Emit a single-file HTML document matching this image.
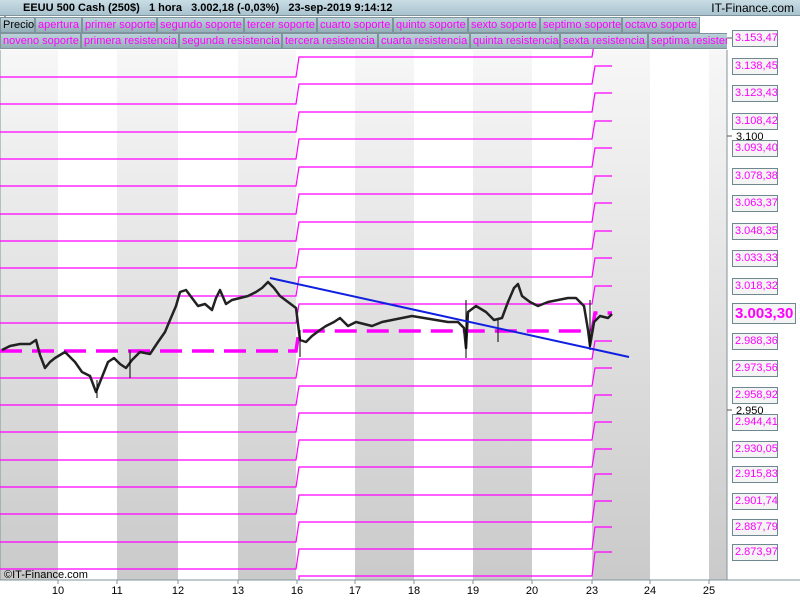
<!DOCTYPE html>
<html><head><meta charset="utf-8"><style>
*{margin:0;padding:0;box-sizing:border-box}
body{width:800px;height:600px;overflow:hidden;background:#fff;font-family:"Liberation Sans",sans-serif;position:relative}
#hdr{position:absolute;left:0;top:0;width:800px;height:16px;background:linear-gradient(#c9dde5,#a9c3cf);border-bottom:1px solid #7f939c;font-size:11px;font-weight:bold;line-height:16px}
.row{position:absolute;left:0;height:17px;width:727px;overflow:hidden;white-space:nowrap;font-size:11px}
.c{position:absolute;top:0;height:16px;line-height:15px;padding-left:2px;color:#f0f;background:linear-gradient(#bcd2da,#94aeb8);border:1px solid #7f939c;overflow:hidden}
.lab{position:absolute;left:732px;width:46px;height:17px;border:1px solid #6f8890;background:#f4f4f4;color:#f0f;font-size:11px;line-height:15px;text-align:left;padding-left:2px;white-space:nowrap;overflow:hidden}
.tk{position:absolute;top:585px;font-size:11px;width:30px;text-align:center}
</style></head><body>
<svg width="800" height="600" style="position:absolute;left:0;top:0">
<defs><linearGradient id="g" x1="0" y1="0" x2="0" y2="1"><stop offset="0" stop-color="#f7f7f7"/><stop offset="1" stop-color="#cacaca"/></linearGradient></defs>
<g fill="url(#g)">
<rect x="0" y="50" width="58" height="530"/><rect x="117" y="50" width="61" height="530"/><rect x="238" y="50" width="58" height="530"/><rect x="355" y="50" width="59" height="530"/><rect x="473" y="50" width="59" height="530"/><rect x="592" y="50" width="58" height="530"/><rect x="709" y="50" width="18" height="530"/>
</g>
<line x1="727" y1="50" x2="727" y2="580" stroke="#7f939c"/>
<line x1="0" y1="580" x2="800" y2="580" stroke="#7f939c"/>
<line x1="0" y1="50" x2="0" y2="580" stroke="#7f939c"/>
<g stroke="#7f939c"><line x1="58" y1="580" x2="58" y2="584"/><line x1="117" y1="580" x2="117" y2="584"/><line x1="178" y1="580" x2="178" y2="584"/><line x1="238" y1="580" x2="238" y2="584"/><line x1="297" y1="580" x2="297" y2="584"/><line x1="355" y1="580" x2="355" y2="584"/><line x1="414" y1="580" x2="414" y2="584"/><line x1="473" y1="580" x2="473" y2="584"/><line x1="532" y1="580" x2="532" y2="584"/><line x1="592" y1="580" x2="592" y2="584"/><line x1="650" y1="580" x2="650" y2="584"/><line x1="709" y1="580" x2="709" y2="584"/></g>
<g fill="none" stroke="#f0f" stroke-width="1.2">
<path d="M0 77H296L299 57H592L595 38H612"/>
<path d="M0 104H296L299 84H592L595 66H612"/>
<path d="M0 132H296L299 112H592L595 93H612"/>
<path d="M0 159H296L299 139H592L595 121H612"/>
<path d="M0 186H296L299 167H592L595 148H612"/>
<path d="M0 214H296L299 194H592L595 176H612"/>
<path d="M0 241H296L299 222H592L595 203H612"/>
<path d="M0 268H296L299 249H592L595 231H612"/>
<path d="M0 296H296L299 277H592L595 258H612"/>
<path d="M0 323H296L299 304H592L595 286H612"/>
<path d="M0 378H296L299 359H592L595 341H612"/>
<path d="M0 405H296L299 386H592L595 368H612"/>
<path d="M0 432H296L299 413H592L595 395H612"/>
<path d="M0 460H296L299 440H592L595 422H612"/>
<path d="M0 487H296L299 467H592L595 449H612"/>
<path d="M0 514H296L299 495H592L595 474H612"/>
<path d="M0 542H296L299 522H592L595 501H612"/>
<path d="M0 569H296L299 549H592L595 527H612"/>
<path d="M299 580V576H592L595 552H612"/>
</g>
<path d="M0 351H296L299 331H592L595 313H612" fill="none" stroke="#f0f" stroke-width="3.5" stroke-dasharray="22 10"/>
<polyline fill="none" stroke="#222" stroke-width="2.5" stroke-linejoin="round" points="2,350 10,346 20,344 30,344 36,340 40,355 45,368 50,362 55,358 65,352 75,362 82,372 90,376 96,392 100,382 104,372 108,362 114,358 120,364 126,368 132,360 140,352 150,354 158,342 165,332 170,320 176,306 180,292 186,290 192,298 198,306 205,304 212,310 216,298 220,290 226,304 232,300 240,298 248,296 256,292 262,288 268,282 274,288 280,296 288,302 296,308 300,340 306,342 312,336 320,330 326,326 334,322 340,318 348,326 356,322 364,324 372,326 382,322 392,320 402,318 412,316 424,318 436,320 448,322 458,322 464,328 466,348 468,312 476,306 486,312 494,320 502,318 508,302 514,288 518,284 522,296 530,302 538,306 548,302 558,300 568,298 576,298 584,306 588,330 590,346 594,322 600,316 608,318 612,314"/>
<g stroke="#000" stroke-width="1"><line x1="466" y1="300" x2="466" y2="358"/><line x1="498" y1="320" x2="498" y2="342"/><line x1="130" y1="350" x2="130" y2="378"/><line x1="97" y1="380" x2="97" y2="398"/><line x1="590" y1="300" x2="590" y2="350"/><line x1="300" y1="330" x2="300" y2="357"/></g>
<line x1="270" y1="278" x2="629" y2="357" stroke="#1020e0" stroke-width="2"/>
<g stroke="#555"><line x1="727" y1="38" x2="732" y2="38"/><line x1="727" y1="136" x2="732" y2="136"/><line x1="727" y1="410" x2="732" y2="410"/></g>
<text x="736" y="140" font-size="11" font-family="Liberation Sans">3.100</text>
<text x="736" y="414" font-size="11" font-family="Liberation Sans">2.950</text>
<text x="4" y="578" font-size="11" font-family="Liberation Sans">©IT-Finance.com</text>
<g transform="translate(3,3)"><rect x="0" y="5" width="4" height="7" fill="#e06060" stroke="#333" stroke-width=".7"/><line x1="2" y1="3" x2="2" y2="14" stroke="#333"/><rect x="6" y="1" width="4" height="9" fill="#40d040" stroke="#333" stroke-width=".7"/><line x1="8" y1="-1" x2="8" y2="12" stroke="#333"/></g>
</svg>
<div id="hdr"><span style="position:absolute;left:23px">EEUU 500 Cash (250$)&nbsp;&nbsp;&nbsp;1 hora&nbsp;&nbsp;&nbsp;3.002,18 (-0,03%)&nbsp;&nbsp;&nbsp;23-sep-2019 9:14:12</span><span style="position:absolute;right:6px;font-weight:normal;font-size:12px">IT-Finance.com</span></div>
<div class="row" style="top:17px">
<div class="c" style="left:0;width:35px;color:#000">Precio</div><div class="c" style="left:35px;width:47px">apertura</div><div class="c" style="left:82px;width:75px">primer soporte</div><div class="c" style="left:157px;width:87px">segundo soporte</div><div class="c" style="left:244px;width:73px">tercer soporte</div><div class="c" style="left:317px;width:76px">cuarto soporte</div><div class="c" style="left:393px;width:75px">quinto soporte</div><div class="c" style="left:468px;width:72px">sexto soporte</div><div class="c" style="left:540px;width:82px">septimo soporte</div><div class="c" style="left:622px;width:78px">octavo soporte</div></div>
<div class="row" style="top:33px">
<div class="c" style="left:0;width:81px">noveno soporte</div><div class="c" style="left:81px;width:98px">primera resistencia</div><div class="c" style="left:179px;width:103px">segunda resistencia</div><div class="c" style="left:282px;width:96px">tercera resistencia</div><div class="c" style="left:378px;width:92px">cuarta resistencia</div><div class="c" style="left:470px;width:90px">quinta resistencia</div><div class="c" style="left:560px;width:88px">sexta resistencia</div><div class="c" style="left:648px;width:90px">septima resistencia</div></div>
<div class="lab" style="top:30px">3.153,47</div>
<div class="lab" style="top:58px">3.138,45</div>
<div class="lab" style="top:85px">3.123,43</div>
<div class="lab" style="top:113px">3.108,42</div>
<div class="lab" style="top:140px">3.093,40</div>
<div class="lab" style="top:168px">3.078,38</div>
<div class="lab" style="top:195px">3.063,37</div>
<div class="lab" style="top:223px">3.048,35</div>
<div class="lab" style="top:250px">3.033,33</div>
<div class="lab" style="top:278px">3.018,32</div>
<div class="lab" style="top:303px;width:64px;height:21px;font-size:15px;font-weight:bold;line-height:19px">3.003,30</div>
<div class="lab" style="top:333px">2.988,36</div>
<div class="lab" style="top:360px">2.973,56</div>
<div class="lab" style="top:387px">2.958,92</div>
<div class="lab" style="top:414px">2.944,41</div>
<div class="lab" style="top:441px">2.930,05</div>
<div class="lab" style="top:466px">2.915,83</div>
<div class="lab" style="top:493px">2.901,74</div>
<div class="lab" style="top:519px">2.887,79</div>
<div class="lab" style="top:544px">2.873,97</div>
<div class="tk" style="left:43px">10</div><div class="tk" style="left:102px">11</div><div class="tk" style="left:163px">12</div><div class="tk" style="left:223px">13</div><div class="tk" style="left:282px">16</div><div class="tk" style="left:340px">17</div><div class="tk" style="left:399px">18</div><div class="tk" style="left:458px">19</div><div class="tk" style="left:517px">20</div><div class="tk" style="left:577px">23</div><div class="tk" style="left:635px">24</div><div class="tk" style="left:694px">25</div>
</body></html>
